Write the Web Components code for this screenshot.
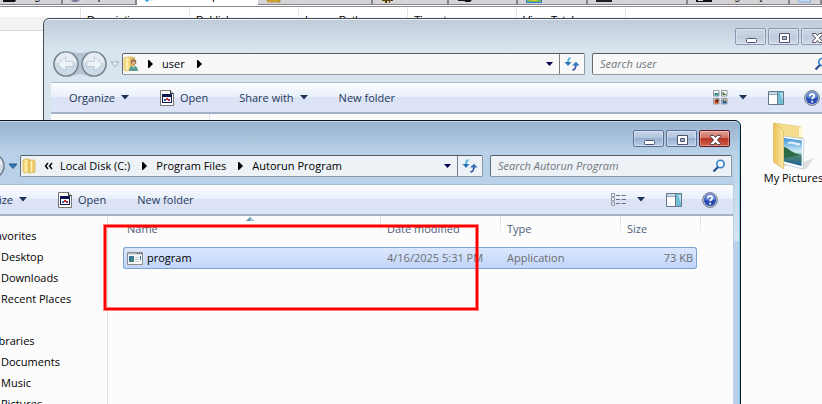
<!DOCTYPE html>
<html lang="en">
<head>
<meta charset="utf-8">
<title>Autorun Program</title>
<style>
html, body { height: 100%; margin: 0; }
body { font: 11px/16px "Open Sans", "Noto Sans", sans-serif; color: #000; overflow: hidden; }
</style>
</head>
<body>
<desktop-area>
  <autoruns-view></autoruns-view>
  <explorer-window slot="windows" class="back" search="Search user">
    <ui-icon slot="place" name="user"></ui-icon>
    <crumb-sep slot="crumbs"></crumb-sep>
    <path-crumb slot="crumbs">user</path-crumb>
    <crumb-sep slot="crumbs"></crumb-sep>
    <tool-button slot="tools" caret>Organize</tool-button>
    <tool-button slot="tools" icon="open">Open</tool-button>
    <tool-button slot="tools" caret>Share with</tool-button>
    <tool-button slot="tools">New folder</tool-button>
    <ui-icon slot="view" name="tiles"></ui-icon>
    <folder-grid></folder-grid>
  </explorer-window>
  <explorer-window slot="windows" class="front" search="Search Autorun Program" active>
    <ui-icon slot="place" name="folder"></ui-icon>
    <crumb-sep slot="crumbs" more></crumb-sep>
    <path-crumb slot="crumbs">Local Disk (C:)</path-crumb>
    <crumb-sep slot="crumbs"></crumb-sep>
    <path-crumb slot="crumbs">Program Files</path-crumb>
    <crumb-sep slot="crumbs"></crumb-sep>
    <path-crumb slot="crumbs">Autorun Program</path-crumb>
    <tool-button slot="tools" caret>Organize</tool-button>
    <tool-button slot="tools" icon="open">Open</tool-button>
    <tool-button slot="tools">New folder</tool-button>
    <ui-icon slot="view" name="details"></ui-icon>
    <nav-group slot="nav" label="Favorites" items="Desktop,Downloads,Recent Places"></nav-group>
    <nav-group slot="nav" label="Libraries" items="Documents,Music,Pictures"></nav-group>
    <file-list></file-list>
  </explorer-window>
  <highlight-frame slot="windows"></highlight-frame>
</desktop-area>

<script>
const define = (name, html, init) => {
  const template = document.createElement('template');
  template.innerHTML = html;
  customElements.define(name, class extends HTMLElement {
    constructor() {
      super();
      this.attachShadow({ mode: 'open' }).append(template.content.cloneNode(true));
    }
    connectedCallback() { if (init) init(this, this.shadowRoot); }
  });
};

const RESET = `*{box-sizing:border-box}button,input{font:inherit;color:inherit;margin:0;padding:0;border:0;background:none}`;

const ICONS = {
  caret: [8, 5, '<path d="M0 0h8L4 4.5z" fill="#1f3358"/>'],
  drop: [7, 4, '<path d="M0 0h7L3.5 4z" fill="#00004d"/>'],
  arrow: [5, 8, '<path d="M0 0h1l4 4-4 4H0z" fill="#000"/>'],
  more: [9, 8, '<path d="M4 1L1.500 4l2.500 3M8 1L5.500 4 8 7" fill="none" stroke="#000" stroke-width="1.400"/>'],
  history: [10, 7, '<path d="M1 1h8L5 5.500z" fill="var(--hist,#eef3f8)" stroke="var(--hist-edge,#9aa9b9)"/>'],
  open: [14, 16, '<path d="M.5.5h10l3 3v12H.5z" fill="#fcfcf8" stroke="#777"/><path d="M10.500.5v3h3" fill="#ddd" stroke="#333"/><rect x="2" y="4" width="10" height="9" fill="#0b1754"/><rect x="3" y="7" width="8" height="5" fill="#fff"/><path d="M4 9h2v2H4z" fill="#2468c8"/><path d="M6 8h2v2H6z" fill="#d02828"/><path d="M8 9h2v2H8z" fill="#a02860"/>'],
  user: [16, 16, '<path d="M1 2l3-1h5v13l-6 1-2-1z" fill="#f6dc83" stroke="#d8b75a" stroke-width=".7"/><path d="M4 2v12" stroke="#fff2bd" stroke-width="1.500"/><path d="M7 1h5v12H7z" fill="#e3c067"/><circle cx="10.500" cy="6" r="2.800" fill="#927049"/><circle cx="10.500" cy="7" r="1.800" fill="#dfb384"/><path d="M6 15c0-7 9-7 9 0z" fill="#5b9f91"/><path d="M9.500 10h2l-1 2z" fill="#eaf5ef"/>'],
  folder: [16, 16, '<path d="M2 2l3-1h3v13l-4 1-2-1z" fill="#f6da78" stroke="#d6b352" stroke-width=".7"/><path d="M8 2h4l2 1v11l-6 1z" fill="#efcd6a" stroke="#d1ab48" stroke-width=".7"/><path d="M5 2v12M10.500 3v11" stroke="#fff3bb" stroke-width="1.400"/>'],
  refresh: [16, 14, '<path d="M6.500 1C4 1.500 4 3 4 5.500" fill="none" stroke="#58b3dc" stroke-width="1.800"/><path d="M.5 5h7L4 9z" fill="#2b75bb"/><path d="M8.500 13c3-.5 3.300-2 3.300-5" fill="none" stroke="#31539d" stroke-width="1.800"/><path d="M8 8.500h7.500L12 4.800z" fill="#3273b8"/>'],
  lens: [14, 14, '<circle cx="8.500" cy="5" r="3.700" fill="#eef6fd" stroke="#3780c4" stroke-width="1.600"/><path d="M6 8L1.500 12.500" stroke="#244f96" stroke-width="2.200"/>'],
  tiles: [15, 15, '<g fill="#fff" stroke="#888e96" stroke-width=".9"><path d="M.5.5h5.500v5.500H.5zM8.500.5H14v5.500H8.500zM.5 8.500H6V14H.5zM8.500 8.500H14V14H8.500z"/></g><path d="M1.500 3h4v2.500h-4z" fill="#268b88"/><path d="M9.500 1.500l4 3.500h-4z" fill="#46782a"/><path d="M1.500 9.500h4v4h-4z" fill="#c03a17"/><path d="M3 9.500h2.500v2H3z" fill="#421"/><path d="M9.500 9.500h4v4h-4z" fill="#275a90"/><path d="M11 9.500h2.500v1.500H11z" fill="#efaa40"/>'],
  details: [15, 13, '<g fill="#fff" stroke="#7d8794" stroke-width=".9"><path d="M.5.5h3v3h-3zM.5 4.800h3v3h-3zM.5 9.200h3v3h-3z"/></g><path d="M5 2.500h4M10.500 2.500H15M5 6.500h4M10.500 6.500H15M5 10.500h4M10.500 10.500H15" stroke="#66768a"/>'],
  pane: [16, 14, '<path d="M.5.5h15v13H.5z" fill="#fff" stroke="#647789"/><path d="M1 1h14v2H1z" fill="#c9d9e5"/><path d="M1 3.500h9" stroke="#98aabb"/><path d="M10 1h5v12h-5z" fill="#70bdd7"/><path d="M12 2l3 0v8z" fill="#b6e2ee"/><path d="M9.500 1v12" stroke="#647789"/>'],
  help: [16, 16, '<circle cx="8" cy="8" r="7.400" fill="#b8bfce" stroke="#70798c"/><circle cx="8" cy="8" r="6" fill="#2749b4"/><path d="M2.500 7a5.500 5.500 0 0 1 11 0c-3 2-8 2-11 0z" fill="#6384d4"/><path d="M5.800 6.300C5.800 3 10.500 3.500 10.300 6c-.1 1.500-2.100 1.600-2.100 3.300M8.200 10.700v1.700" fill="none" stroke="#fff" stroke-width="1.800"/>'],
  app: [16, 13, '<path d="M.5.5h15v12H.5z" fill="#f7f7f7" stroke="#8c8c8c"/><path d="M1 1h14v1.500H1z" fill="#b9bec2"/><path d="M10 1h1v1h-1zM12 1h1v1h-1zM14 1h1v1h-1z" fill="#555"/><path d="M2 4h5v6H2z" fill="#3c7d83"/><path d="M2 4h3L2 8z" fill="#346db0"/><path d="M8 5.500h4M8 7.500h4M8 9.500h4" stroke="#c4c8ce"/><path d="M13.500 4v4" stroke="#397b93"/>'],
  sort: [8, 4, '<path d="M0 4l4-4 4 4z" fill="#5e92ad"/><path d="M4 0l4 4H4z" fill="#8fc0d6"/>'],
  min: [31, 18, '<rect x="10.500" y="9.500" width="10" height="4" rx="1" fill="#fff" stroke="#4f536b"/>'],
  max: [31, 18, '<path d="M10.500 4.500h10v9h-10z" fill="#fff" stroke="#4f536b"/><path d="M13.500 7.500h4v3h-4z" fill="#aebad1" stroke="#4f536b"/>'],
  close: [31, 18, '<path d="M10.500 4.500h3.200l1.800 2 1.800-2h3.200v1.200L17.400 9l3.100 3.300v1.200h-3.200l-1.800-2-1.800 2h-3.200v-1.200L13.600 9l-3.100-3.300z" fill="#fff" stroke="#4f4558"/>'],
  travel: [56, 28, '<path d="M14 1c5 0 9 2 14 2s9-2 14-2a13 13 0 0 1 0 26c-8 0-9-3-14-3s-6 3-14 3A13 13 0 0 1 14 1z" fill="#a9bac9" opacity=".8"/><g fill="#cdd9e5" stroke="#6a7380" stroke-width="1.200"><circle cx="14" cy="14" r="12"/><circle cx="42" cy="14" r="12"/></g><path d="M3.500 13a10.500 10.500 0 0 1 21 0zM31.500 13a10.500 10.500 0 0 1 21 0z" fill="#edf2f7" opacity=".75"/><g fill="#eff4f8" stroke="#b4c1cd" stroke-width=".7"><path d="M5.500 14l8-7v4.500h7.500v5H13.500V21z"/><path d="M50.500 14l-8-7v4.500H35v5h7.500V21z"/></g>'],
  pictures: [44, 48, '<defs><linearGradient id="g" x2="1" y2="0"><stop stop-color="#e9bf56"/><stop offset="1" stop-color="#fae9a8"/></linearGradient><linearGradient id="s" x2="0" y2="1"><stop stop-color="#3c93d8"/><stop offset=".5" stop-color="#d3edf7"/><stop offset=".65" stop-color="#49856d"/><stop offset="1" stop-color="#235e9b"/></linearGradient></defs><path d="M31 40l11-4-8 11h-6z" fill="#bbb" opacity=".45"/><path d="M2 1l28 4v30L12 44z" fill="#f5dc8e" stroke="#dfbc62" stroke-width=".6"/><path d="M27 5h4v10h-4z" fill="#fff8dc"/><path d="M11 14l21 3-1 30-20-5z" fill="#fff" stroke="#aec5d6" stroke-width=".7"/><path d="M12 16l18 2.500-.5 25.500L12 39.500z" fill="url(#s)"/><path d="M12 25c5 1 7 6 17 8l-17 3z" fill="#2c6b45"/><path d="M16 21c5-2 7 2 12 1" stroke="#fff" stroke-width="2" fill="none" opacity=".8"/><path d="M1.500 1l10 7v39l-10-7z" fill="url(#g)" stroke="#d9b04a" stroke-width=".6"/>'],
  t0: [16, 3, '<path d="M1 0h12v2H1z" fill="#111"/><path d="M12 0l2 1" stroke="#111"/>'],
  t1: [10, 3, '<path d="M0 0h9L6 2H2z" fill="#8178a8"/>'],
  t2: [10, 3, '<path d="M0 0h4L2 2zM5 0h3" fill="#3da2df" stroke="#3da2df" stroke-width=".5"/>'],
  t3: [16, 3, '<path d="M1 0h13v2H2z" fill="#efbd3d" stroke="#94701a" stroke-width=".7"/>'],
  t4: [14, 3, '<path d="M1 0h11v1h-3v2H8V1H6v2H4V1H1z" fill="#554400"/>'],
  t5: [16, 3, '<path d="M1 0h14l-2 2H8V1H1z" fill="#111"/>'],
  t6: [16, 3, '<path d="M.5 0v2.500h15V0" fill="#77b957" stroke="#287bd5"/><path d="M5 0h6v1H5z" fill="#e0c02e"/>'],
  t7: [16, 3, '<path d="M0 0h16v2H0z" fill="#222"/>'],
  t8: [16, 3, '<path d="M0 0h16v2H0z" fill="#111"/><path d="M2 0h5v1H2z" fill="#ddd"/>'],
  t9: [14, 3, '<path d="M.5 0v2h12V0" fill="#c7dcf5" stroke="#84a8dc"/>']
};

define('ui-icon', `<style>:host{display:block;flex:none;line-height:0}svg{display:block}</style>`, (el, root) => {
  if (root.querySelector('svg')) return;
  const [w, h, body] = ICONS[el.getAttribute('name')];
  root.innerHTML += `<svg width="${w}" height="${h}" viewBox="0 0 ${w} ${h}" aria-hidden="true">${body}</svg>`;
});

define('desktop-area', `<style>
:host{display:block;position:relative;height:100%;overflow:hidden;background:#fff}
::slotted(.back){position:absolute;left:43px;right:-21px;top:18px;bottom:-60px}
::slotted(.front){position:absolute;left:-59px;right:81px;top:120px;bottom:-60px}
::slotted(highlight-frame){position:absolute;left:104px;top:225px;width:374px;height:85px}
</style><slot></slot><slot name="windows"></slot>`);

define('highlight-frame', `<style>:host{display:block;box-sizing:border-box;border:2px solid #f00;box-shadow:0 0 0 1px #ff000080,inset 0 0 0 1px #ff000080;pointer-events:none}</style>`);

define('autoruns-view', `<style>${RESET}
:host{display:block;font:11px/13px "Liberation Sans",sans-serif}
.tabs{display:flex;height:7px;background:#fff;border-bottom:1px solid #8c8890;overflow:hidden}
.tabs button{display:flex;flex:none;gap:4px;height:5px;align-items:flex-start;background:#d6d4d6;border-right:2px solid #88858f;border-bottom:1px solid #85828b;padding-left:8px;white-space:nowrap}
.tabs button:first-child{padding-left:2px}
.tabs button:last-child{flex:1}
.tabs button.on{background:#fff;border-color:#fff}
.tabs span{margin-top:-10px}
.cols{display:flex;height:24px;background:linear-gradient(#fff 10px,#f3f3f3 10px);border-bottom:1px solid #dcdcdc}
.cols span{width:109px;padding:7px 0 0 6px;border-right:1px solid #e4e4e4}
.cols span:first-child{width:81px}
</style><div class="tabs" role="tablist"></div><div class="cols"></div>`, (el, root) => {
  const tabs = [['Logon', 63], ['Explorer', 74], ['Internet Explorer', 121], ['Scheduled Tasks', 115], ['Services', 76], ['Drivers', 69], ['Codecs', 70], ['Boot Execute', 100], ['Image Hijacks', 102], ['AppInit', 30]];
  root.querySelector('.tabs').innerHTML = tabs.map(([t, w], i) =>
    `<button role="tab" style="width:${w}px" class="${i === 2 ? 'on' : ''}"><ui-icon name="t${i}"></ui-icon><span>${t}</span></button>`).join('');
  root.querySelector('.cols').innerHTML = ['', 'Description', 'Publisher', 'Image Path', 'Timestamp', 'Virus Total'].map(t => `<span>${t}</span>`).join('');
});

define('explorer-window', `<style>${RESET}
:host{--frame:#d8e4ee;--top:#bfcbd8;--bar:#f8f8f8;--btn:linear-gradient(#ccd7e4,#c3cfdf 50%,#bdcbdd 50%,#cddae8);--btn-edge:#8d95b3;
 display:flex;flex-direction:column;box-sizing:border-box;border:1px solid #474b55;border-radius:6px 6px 0 0;padding:0 7px;
 background:linear-gradient(var(--top),var(--frame) 32px);box-shadow:inset 0 1px #edf4fa;overflow:hidden}
:host([active]){--frame:#b9d1e8;--top:#98b2ce;--bar:#edf2f7;--btn:linear-gradient(#c5d4e8,#b0c4de 50%,#98b0d0 50%,#b9cfe8);--btn-edge:#5e6f94;--hist:#2c78b8;--hist-edge:#25578d;
 border-color:#10151c;box-shadow:inset -1px 0 #73cdea,inset 0 1px #c6dff2;
 background:linear-gradient(transparent 30px,#d5e4f1 120px) right/6px 120px no-repeat,linear-gradient(var(--top),var(--frame) 32px);background-position:right top,0 0}
.title{display:flex;justify-content:flex-end;gap:2px;padding:9px 3px 8px}
.title button{width:31px;height:17px;border:1px solid var(--btn-edge);border-radius:2px;background:var(--btn);box-shadow:inset 0 0 0 1px #ffffff55;display:grid;place-items:center;overflow:hidden}
:host([active]) .title .x{border-color:#5b1822;background:linear-gradient(#dda095,#cf6b5b 50%,#b93422 50%,#cf6047)}
.path{display:flex;align-items:center;padding:0 1px 7px 0}
.travel{margin:-3px 2px -3px 1px}
.hist{margin-right:2px}
.box{display:flex;align-items:center;height:22px;background:var(--bar);border:1px solid #8f99a5;border-top-color:#555c64;border-left-color:#666d76;border-radius:2px}
.addr{flex:1;min-width:0}
.addr nav{display:flex;align-items:center;flex:1;min-width:0}
.drop{padding:0 6px}
.ref{display:grid;place-items:center;align-self:stretch;width:25px;border-left:1px solid #777e87}
.find{width:242px;margin-left:7px;padding:0 5px 0 7px}
input{flex:1;min-width:0;font-style:italic;outline:0}
input::placeholder{color:#70757b;opacity:1}
.tools{display:flex;align-items:center;gap:31px;height:32px;flex:none;padding:0 15px 0 18px;background:linear-gradient(#fcfeff,#e7effa 50%,#dce3f6 50%,#dde4f6);border-top:1px solid #a9bdd0;border-bottom:2px solid #a3b0c6;color:#1e395b}
.right{display:flex;align-items:center;margin-left:auto}
.right button{display:grid;place-items:center}
.view{margin-right:11px}.vc{margin-right:21px}.pn{margin-right:20px}
.body{display:flex;flex:1;min-height:0;background:#fcfcfc}
.side{width:159px;flex:none;border-right:1px solid #d9e4ef;padding-top:9px}
.main{flex:1;min-width:0}
</style>
<div class="title"><button aria-label="Minimize"><ui-icon name="min"></ui-icon></button><button aria-label="Maximize"><ui-icon name="max"></ui-icon></button><button class="x" aria-label="Close"><ui-icon name="close"></ui-icon></button></div>
<div class="path">
 <button class="travel" aria-label="Back and forward"><ui-icon name="travel"></ui-icon></button>
 <button class="hist" aria-label="Recent locations"><ui-icon name="history"></ui-icon></button>
 <div class="box addr"><nav><slot name="place"></slot><slot name="crumbs"></slot></nav>
 <button class="drop" aria-label="Previous locations"><ui-icon name="drop"></ui-icon></button><button class="ref" aria-label="Refresh"><ui-icon name="refresh"></ui-icon></button></div>
 <div class="box find"><input type="text"><ui-icon name="lens"></ui-icon></div>
</div>
<div class="tools"><slot name="tools"></slot><div class="right">
 <button class="view" aria-label="Change view"><slot name="view"></slot></button><button class="vc" aria-label="More view options"><ui-icon name="caret"></ui-icon></button>
 <button class="pn" aria-label="Preview pane"><ui-icon name="pane"></ui-icon></button><button aria-label="Help"><ui-icon name="help"></ui-icon></button></div></div>
<div class="body"><div class="side"><slot name="nav"></slot></div><div class="main"><slot></slot></div></div>`, (el, root) => {
  const input = root.querySelector('input');
  input.placeholder = el.getAttribute('search');
  input.setAttribute('aria-label', el.getAttribute('search'));
});

define('crumb-sep', `<style>:host{display:grid;place-items:center;width:23px;flex:none}</style>`, (el, root) => {
  root.innerHTML += `<ui-icon name="${el.hasAttribute('more') ? 'more' : 'arrow'}"></ui-icon>`;
});
define('path-crumb', `<style>${RESET}:host{display:block}button{display:block;padding-right:3px;white-space:nowrap}</style><button><slot></slot></button>`);

define('tool-button', `<style>${RESET}:host{display:block}button{display:flex;align-items:center;gap:6px;white-space:nowrap}</style><button><slot></slot></button>`, (el, root) => {
  const b = root.querySelector('button');
  if (el.hasAttribute('icon')) b.insertAdjacentHTML('afterbegin', `<ui-icon name="${el.getAttribute('icon')}"></ui-icon>`);
  if (el.hasAttribute('caret')) b.insertAdjacentHTML('beforeend', '<ui-icon name="caret"></ui-icon>');
});

define('nav-group', `<style>${RESET}:host{display:block;margin-bottom:21px;padding-left:41px;line-height:21px;white-space:nowrap}
ul{list-style:none;margin:0;padding:0 0 0 11px}a{color:inherit;text-decoration:none}</style><div></div><ul></ul>`, (el, root) => {
  root.querySelector('div').textContent = el.getAttribute('label');
  root.querySelector('ul').innerHTML = el.getAttribute('items').split(',').map(t => `<li><a href="#">${t}</a></li>`).join('');
});

define('file-list', `<style>${RESET}
:host{display:block;padding-left:15px}
table{border-collapse:separate;border-spacing:0;table-layout:fixed;width:578px}
.n{width:258px}.d,.t{width:120px}.s{width:76px}
th{height:21px;padding:4px 0 0 6px;text-align:left;font-weight:400;color:#4c607a;position:relative;background:linear-gradient(#d5dfeb,#fcfcfc) right/1px 100% no-repeat}
th:first-child{padding-left:4px}
th:nth-child(4){background:none}
th ui-icon{position:absolute;left:calc(50% - 6px);top:1px}
td{height:22px;padding:0 0 0 6px;color:#6d6d6d;border:solid #7da2ce;border-width:1px 0;background:linear-gradient(#dce7fd,#c1d5fb)}
td:first-child{border-left-width:1px;border-radius:3px 0 0 3px;padding-left:3px;color:#000}
td:nth-child(4){border-right-width:1px;border-radius:0 3px 3px 0;text-align:right;padding-right:3px}
td:last-child{border:0;background:none;padding:0}
tr.gap td{height:10px;border:0;background:none}
.file{display:flex;align-items:center;gap:4px}
</style><table><colgroup><col class="n"><col class="d"><col class="t"><col class="s"><col></colgroup>
<thead><tr><th>Name<ui-icon name="sort"></ui-icon></th><th>Date modified</th><th>Type</th><th>Size</th><th></th></tr></thead>
<tbody><tr class="gap"><td colspan="5"></td></tr><tr><td><div class="file"><ui-icon name="app"></ui-icon>program</div></td><td>4/16/2025 5:31 PM</td><td>Application</td><td>73 KB</td><td></td></tr></tbody></table>`);

define('folder-grid', `<style>
:host{display:flex;justify-content:flex-end;padding:8px 3px 0 0}
figure{margin:0;width:77px;display:flex;flex-direction:column;align-items:center;white-space:nowrap}
</style><figure><ui-icon name="pictures"></ui-icon><figcaption>My Music</figcaption></figure><figure><ui-icon name="pictures"></ui-icon><figcaption>My Pictures</figcaption></figure>`);
</script>
</body>
</html>
